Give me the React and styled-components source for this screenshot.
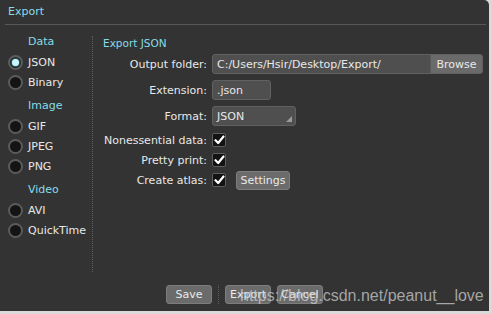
import React from "react";
import styled, { createGlobalStyle } from "styled-components";

const Global = createGlobalStyle`
  html, body { margin: 0; padding: 0; background: #d9d9d9; }
  body { font-family: "DejaVu Sans", Verdana, sans-serif; font-size: 11px; color: #e8e8e8; }
  * { box-sizing: border-box; }
`;

const Window = styled.div`
  position: relative;
  width: 489px;
  height: 311px;
  background: #333333;
  border-top-right-radius: 5px;
  display: flex;
  flex-direction: column;
  overflow: hidden;
`;

const TitleBar = styled.div`
  height: 25px;
  margin: 0 3px 0 5px;
  padding: 5px 0 0 3px;
  border-bottom: 1px solid #575757;
  color: #86dce9;
  font-size: 11px;
`;

const Body = styled.div`
  height: 254px;
  display: flex;
`;

const Sidebar = styled.div`
  width: 92px;
  padding-top: 10px;
  display: flex;
  flex-direction: column;
`;

const Divider = styled.div`
  width: 1px;
  margin: 11px 0 7px;
  border-left: 1px dotted #5c5c5c;
`;

const GroupHeader = styled.div`
  height: 14px;
  line-height: 14px;
  padding-left: 28px;
  color: #86dce9;
  font-size: 11px;
  margin-top: ${(p) => (p.$first ? 0 : 7)}px;
  margin-bottom: 3px;
`;

const RadioRow = styled.div`
  height: 20px;
  display: flex;
  align-items: center;
  padding-left: 8px;
  gap: 5px;
`;

const RadioDot = styled.span`
  width: 15px;
  height: 15px;
  border-radius: 50%;
  background: #141414;
  border: 2px solid #5b5b5b;
  display: flex;
  align-items: center;
  justify-content: center;
  &::after {
    content: "";
    display: ${(p) => (p.$on ? "block" : "none")};
    width: 7px;
    height: 7px;
    border-radius: 50%;
    background: #c8f6ff;
    box-shadow: 0 0 3px #7fe3f5;
  }
`;

const Main = styled.div`
  flex: 1;
  padding: 11px 6px 0 10px;
  display: flex;
  flex-direction: column;
`;

const SectionTitle = styled.div`
  height: 14px;
  line-height: 14px;
  color: #86dce9;
  font-size: 10.5px;
  margin-bottom: 4px;
`;

const Row = styled.div`
  height: 20px;
  margin-top: ${(p) => p.$mt || 0}px;
  display: flex;
  align-items: center;
  gap: 5px;
`;

const Label = styled.span`
  width: 104px;
  text-align: right;
  white-space: nowrap;
`;

const Field = styled.div`
  height: 20px;
  width: ${(p) => (p.$w ? `${p.$w}px` : "auto")};
  flex: ${(p) => (p.$w ? "none" : 1)};
  display: flex;
  align-items: center;
  background: #4f4f4f;
  border: 1px solid #616161;
  border-radius: 3px;
  overflow: hidden;
  position: relative;
`;

const FieldText = styled.span`
  flex: 1;
  padding-left: 4px;
  white-space: nowrap;
`;

const BrowseButton = styled.span`
  height: 100%;
  width: 52px;
  display: flex;
  align-items: center;
  justify-content: center;
  background: #6a6a6a;
  border-left: 1px solid #5a5a5a;
`;

const SelectArrow = styled.span`
  position: absolute;
  right: 3px;
  bottom: 3px;
  width: 0;
  height: 0;
  border-left: 6px solid transparent;
  border-bottom: 6px solid #9a9a9a;
`;

const Check = styled.span`
  width: 14px;
  height: 14px;
  background: #121212;
  border: 1px solid #5e5e5e;
  border-radius: 2px;
  display: flex;
  align-items: center;
  justify-content: center;
`;

const Button = styled.button`
  height: 19px;
  width: ${(p) => p.$w || 46}px;
  margin-left: ${(p) => p.$ml || 0}px;
  padding: 0;
  background: #6b6b6b;
  border: 1px solid #7d7d7d;
  border-radius: 3px;
  color: #eaeaea;
  font-family: inherit;
  font-size: 11px;
  white-space: nowrap;
`;

const Footer = styled.div`
  flex: 1;
  display: flex;
  justify-content: center;
  align-items: flex-start;
  padding-top: 6px;
  gap: 6px;
`;

const FooterSep = styled.span`
  width: 1px;
  height: 19px;
  border-left: 1px dotted #5c5c5c;
`;

const Watermark = styled.div`
  position: absolute;
  left: 240px;
  top: 287px;
  font-family: "Liberation Sans", Arial, sans-serif;
  font-size: 16px;
  color: rgba(205, 205, 205, 0.75);
  white-space: nowrap;
  pointer-events: none;
`;

const CheckMark = () => (
  <svg width="11" height="10" viewBox="0 0 11 10">
    <path d="M1.5 5.2 L4.2 8 L9.5 1.5" fill="none" stroke="#fff" strokeWidth="2.2" strokeLinecap="round" strokeLinejoin="round" />
  </svg>
);

const groups = [
  { title: "Data", items: [["JSON", true], ["Binary", false]] },
  { title: "Image", items: [["GIF"], ["JPEG"], ["PNG"]] },
  { title: "Video", items: [["AVI"], ["QuickTime"]] },
];

export default function App() {
  return (
    <>
      <Global />
      <Window>
        <TitleBar>Export</TitleBar>
        <Body>
          <Sidebar>
            {groups.map((g, gi) => (
              <React.Fragment key={g.title}>
                <GroupHeader $first={gi === 0}>{g.title}</GroupHeader>
                {g.items.map(([name, on]) => (
                  <RadioRow key={name}>
                    <RadioDot $on={on} />
                    <span>{name}</span>
                  </RadioRow>
                ))}
              </React.Fragment>
            ))}
          </Sidebar>
          <Divider />
          <Main>
            <SectionTitle>Export JSON</SectionTitle>
            <Row>
              <Label>Output folder:</Label>
              <Field>
                <FieldText>C:/Users/Hsir/Desktop/Export/</FieldText>
                <BrowseButton>Browse</BrowseButton>
              </Field>
            </Row>
            <Row $mt={6}>
              <Label>Extension:</Label>
              <Field $w={59}>
                <FieldText>.json</FieldText>
              </Field>
            </Row>
            <Row $mt={6}>
              <Label>Format:</Label>
              <Field $w={84}>
                <FieldText>JSON</FieldText>
                <SelectArrow />
              </Field>
            </Row>
            <Row $mt={4}>
              <Label>Nonessential data:</Label>
              <Check><CheckMark /></Check>
            </Row>
            <Row>
              <Label>Pretty print:</Label>
              <Check><CheckMark /></Check>
            </Row>
            <Row>
              <Label>Create atlas:</Label>
              <Check><CheckMark /></Check>
              <Button $w={54} $ml={5}>Settings</Button>
            </Row>
          </Main>
        </Body>
        <Footer>
          <Button>Save</Button>
          <FooterSep />
          <Button>Export</Button>
          <Button>Cancel</Button>
        </Footer>
        <Watermark>https://blog.csdn.net/peanut__love</Watermark>
      </Window>
    </>
  );
}
